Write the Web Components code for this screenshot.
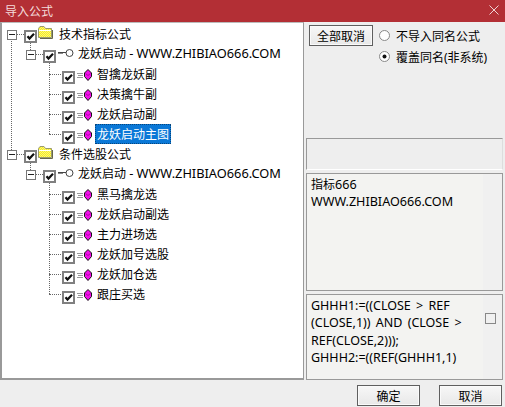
<!DOCTYPE html>
<html>
<head>
    <title>导入公式</title>
    <style>
        html, body { margin: 0; height: 100%; background: #eeeeee; overflow: hidden; }
        body { font: 12px "Noto Sans", "Noto Sans CJK SC", sans-serif; color: #000; }
    </style>
</head>
<body>
<script>
    const face = '"Noto Sans", "Noto Sans CJK SC", sans-serif';

    customElements.define('x-titlebar', class extends HTMLElement {
        constructor() {
            super();
            this.attachShadow({mode: 'open'}).innerHTML = `
<style>
    :host { display: flex; align-items: center; justify-content: space-between; height: 22px; background: #b32f35; color: #f4dcdc; padding: 0 6px 0 5px; font: 12px ${face}; }
    svg { display: block; margin-top: -3px; }
</style>
<slot></slot>
<svg width="10" height="10" viewBox="0 0 10 10"><path d="M.5.5l9 9M9.500.5l-9 9" stroke="#eed2d2" fill="none"/></svg>`;
        }
    });

    // one row of the tree; level decides the indent and which icon it carries
    customElements.define('x-row', class extends HTMLElement {
        constructor() {
            super();
            const level = +this.getAttribute('level');
            const icons = [
                `<svg width="15" height="13" viewBox="0 0 15 13"><defs><pattern id="d" width="2" height="2" patternUnits="userSpaceOnUse"><rect width="2" height="2" fill="#f6ee20"/><rect width="1" height="1" fill="#fbf47a"/><rect x="1" y="1" width="1" height="1" fill="#fbf47a"/></pattern></defs><path d="M.5 11.500V2.500l1.500-2h4l1.500 2h6v9z" fill="url(#d)" stroke="#9a9a70"/><path d="M1 4.500h12" stroke="#fff" fill="none"/><path d="M14.500 4v8.500H2" stroke="#66664c" fill="none"/></svg>`,
                `<svg width="16" height="8" viewBox="0 0 16 8"><circle cx="11.500" cy="4" r="3.500" fill="#fff" stroke="#444"/><path d="M0 3.500h8" stroke="#444" fill="none"/><path d="M0 4.500h5" stroke="#888" fill="none"/></svg>`,
                `<svg width="15" height="12" viewBox="0 0 15 12"><path d="M0 4.500h6M1 6.500h5M0 8.500h6" stroke="#999" fill="none"/><path d="M11 .5l3.500 3.500v3.500L11 11.500 7.500 7.500V4z" fill="#f010e8" stroke="#151515"/><path d="M8.500 4.500l2.500 2 2.500-2" stroke="#b000a8" fill="none"/></svg>`
            ];
            this.attachShadow({mode: 'open'}).innerHTML = `
<style>
    :host { display: flex; align-items: flex-start; height: 20px; position: relative; padding-left: ${[5, 24, 43][level]}px; font: 12px ${face}; white-space: nowrap; }
    .exp { width: 8px; height: 8px; border: 1px solid #777; background: #fff; position: relative; margin: 5px 7px 0 0; flex: none; z-index: 1; }
    .exp::after { content: ""; position: absolute; left: 1px; right: 1px; top: 3px; height: 1px; background: #222; }
    .leaf { width: 10px; margin-right: 7px; flex: none; }
    .box { width: 9px; height: 9px; border: 2px solid #808080; background: #fff; flex: none; margin-top: ${[5, 5, 6][level]}px; z-index: 1; position: relative; }
    .box svg { display: block; position: absolute; left: 0; top: 0; }
    .ico { margin-left: ${[1, 2, 2][level]}px; margin-top: ${[1, 4, 4][level]}px; flex: none; display: block; }
    .ico svg { display: block; }
    .txt { margin-left: ${[4, 2, 3][level]}px; padding: 0 2px; line-height: 21px; height: 20px; margin-top: ${[-1, -2, -1][level]}px; }
    :host([selected]) .txt { background: #0a78d7; color: #fff; outline: 1px dotted #06467e; outline-offset: -1px; }
    .h { position: absolute; border-top: 1px dotted #666; top: 9px; left: ${[14, 33, 47][level]}px; width: ${[8, 8, 14][level]}px; }
</style>
${level === 2 ? '<span class="leaf"></span>' : '<span class="exp"></span>'}
<span class="h"></span>
<span class="box"><svg width="9" height="9" viewBox="0 0 9 9"><path d="M1.500 4.200l2 2.300L8 1.800" stroke="#111" stroke-width="2.200" fill="none"/></svg></span>
<span class="ico">${icons[level]}</span>
<span class="txt"><slot></slot></span>`;
        }
    });

    customElements.define('x-tree', class extends HTMLElement {
        constructor() {
            super();
            this.attachShadow({mode: 'open'}).innerHTML = `
<style>
    :host { display: block; position: relative; background: #fff; border-left: 2px solid #999; border-bottom: 2px solid #999; border-right: 1px solid #999; border-top: 1px solid #bbb; padding-top: 2px; box-sizing: border-box; overflow: hidden; }
    i { position: absolute; width: 0; border-left: 1px dotted #666; }
</style>
<i style="left:9px;top:16px;height:111px"></i>
<i style="left:28px;top:19px;height:8px"></i>
<i style="left:47px;top:40px;height:71px"></i>
<i style="left:28px;top:139px;height:8px"></i>
<i style="left:47px;top:160px;height:111px"></i>
<slot></slot>`;
        }
    });

    customElements.define('x-button', class extends HTMLElement {
        constructor() {
            super();
            this.attachShadow({mode: 'open'}).innerHTML = `
<style>
    :host { display: flex; align-items: center; justify-content: center; box-sizing: border-box; height: 21px; border: 1px solid #5f5f5f; box-shadow: inset 0 0 0 1px #fafafa; background: linear-gradient(#f7f7f7, #e8e8e8); font: 12px ${face}; }
</style>
<slot></slot>`;
        }
    });

    customElements.define('x-radio', class extends HTMLElement {
        constructor() {
            super();
            const on = this.hasAttribute('checked');
            this.attachShadow({mode: 'open'}).innerHTML = `
<style>
    :host { display: flex; align-items: center; height: 21px; gap: 6px; font: 12px ${face}; white-space: nowrap; }
    svg { display: block; flex: none; }
</style>
<svg width="11" height="11" viewBox="0 0 11 11"><circle cx="5.500" cy="5.500" r="5" fill="#fff" stroke="#888"/>${on ? '<circle cx="5.500" cy="5.500" r="2" fill="#111"/>' : ''}</svg>
<slot></slot>`;
        }
    });

    customElements.define('x-panel', class extends HTMLElement {
        constructor() {
            super();
            this.attachShadow({mode: 'open'}).innerHTML = `
<style>
    :host { display: block; position: relative; box-sizing: border-box; border: 1px solid #999; background: linear-gradient(to right, #f3f3f1 176px, #f0f0f0 176px); padding: 2px 3px 0 4px; font: 12px/17.300px ${face}; overflow: hidden; }
    :host([blank]) { background: #eeeeee; border-right-color: #ddd; border-bottom-color: #fff; }
    .sb { position: absolute; right: 6px; top: 18px; width: 9px; height: 9px; border: 1px solid #888; display: none; }
    :host([scroll]) .sb { display: block; }
</style>
<slot></slot><span class="sb"></span>`;
        }
    });

    customElements.define('x-import-dialog', class extends HTMLElement {
        constructor() {
            super();
            this.attachShadow({mode: 'open'}).innerHTML = `
<style>
    :host { display: grid; grid-template-columns: 304px 1fr; grid-template-rows: 22px 358px 1fr; width: 505px; height: 407px; background: #eeeeee; }
    x-titlebar { grid-column: 1 / 3; }
    .side { display: flex; flex-direction: column; padding: 3px 2px 0 2px; }
    .top { display: flex; gap: 6px; height: 113px; padding-left: 3px; }
    .top x-button { width: 64px; }
    .radios { display: flex; flex-direction: column; }
    .side x-panel:nth-of-type(1) { height: 32px; }
    .side x-panel:nth-of-type(2) { height: 118px; margin-top: 3px; }
    .side x-panel:nth-of-type(3) { height: 86px; margin-top: 3px; }
    .foot { grid-column: 1 / 3; display: flex; justify-content: flex-end; gap: 19px; padding: 5px 3px 0 0; }
    .foot x-button { width: 63px; }
    .l { font-size: 12.800px; }
    .u { font-size: 12.600px; }
    .f { font-size: 12.500px; word-spacing: 2px; }
</style>
<x-titlebar>导入公式</x-titlebar>
<x-tree>
    <x-row level="0">技术指标公式</x-row>
    <x-row level="1">龙妖启动 <span class="l">- WWW.ZHIBIAO666.COM</span></x-row>
    <x-row level="2">智擒龙妖副</x-row>
    <x-row level="2">决策擒牛副</x-row>
    <x-row level="2">龙妖启动副</x-row>
    <x-row level="2" selected>龙妖启动主图</x-row>
    <x-row level="0">条件选股公式</x-row>
    <x-row level="1">龙妖启动 <span class="l">- WWW.ZHIBIAO666.COM</span></x-row>
    <x-row level="2">黑马擒龙选</x-row>
    <x-row level="2">龙妖启动副选</x-row>
    <x-row level="2">主力进场选</x-row>
    <x-row level="2">龙妖加号选股</x-row>
    <x-row level="2">龙妖加仓选</x-row>
    <x-row level="2">跟庄买选</x-row>
</x-tree>
<div class="side">
    <div class="top">
        <x-button>全部取消</x-button>
        <div class="radios">
            <x-radio>不导入同名公式</x-radio>
            <x-radio checked>覆盖同名(非系统)</x-radio>
        </div>
    </div>
    <x-panel blank></x-panel>
    <x-panel>指标<span class="u">666<br>WWW.ZHIBIAO666.COM</span></x-panel>
    <x-panel scroll><span class="f">GHHH1:=((CLOSE &gt; REF<br>(CLOSE,1)) AND (CLOSE &gt;<br>REF(CLOSE,2)));<br>GHHH2:=((REF(GHHH1,1)</span></x-panel>
</div>
<div class="foot">
    <x-button>确定</x-button>
    <x-button>取消</x-button>
</div>`;
        }
    });
</script>
<x-import-dialog></x-import-dialog>
</body>
</html>
